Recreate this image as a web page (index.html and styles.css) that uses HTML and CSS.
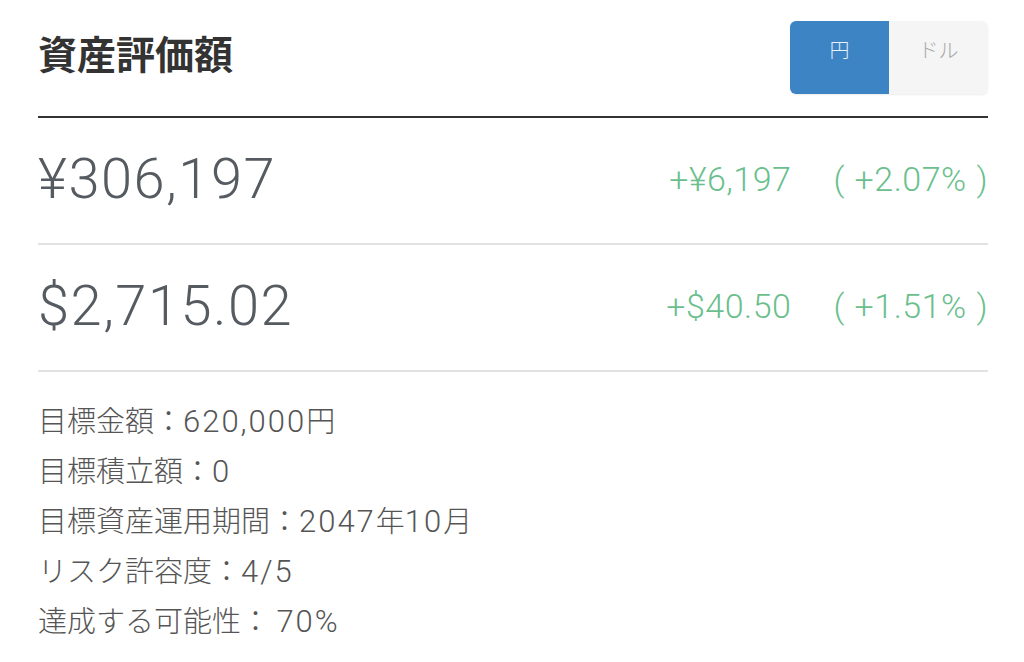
FILE: index.html
```html
<!DOCTYPE html>
<html lang="ja">
<head>
<meta charset="utf-8">
<link rel="stylesheet" href="styles.css">
</head>
<body>
<div class="page">
  <header class="header">
    <h1 class="title">資産評価額</h1>
    <div class="toggle">
      <div class="toggle-btn active">円</div>
      <div class="toggle-btn">ドル</div>
    </div>
  </header>
  <div class="row">
    <div class="amount">¥306,197</div>
    <div class="change"><span class="diff">+¥6,197</span><span class="pct">( +2.07% )</span></div>
  </div>
  <div class="row">
    <div class="amount">$2,715.02</div>
    <div class="change"><span class="diff">+$40.50</span><span class="pct">( +1.51% )</span></div>
  </div>
  <ul class="info">
    <li>目標金額：<span class="num">620,000</span>円</li>
    <li>目標積立額：<span class="num">0</span></li>
    <li>目標資産運用期間：<span class="num">2047</span>年<span class="num">10</span>月</li>
    <li>リスク許容度：<span class="num">4/5</span></li>
    <li>達成する可能性： <span class="num">70%</span></li>
  </ul>
</div>
</body>
</html>
```

FILE: styles.css
```css
html, body {
  margin: 0;
  padding: 0;
  background: #ffffff;
}
body {
  font-family: Roboto, "Noto Sans CJK JP", sans-serif;
  color: #333;
}
.page {
  padding: 0 36px 0 38px;
}
.header {
  display: flex;
  justify-content: space-between;
  align-items: flex-start;
  height: 116px;
  border-bottom: 2px solid #333;
}
.title {
  margin: 24px 0 0 0;
  font-family: "Noto Sans CJK JP", sans-serif;
  font-size: 39px;
  font-weight: 700;
  line-height: 56px;
  color: #333;
}
.toggle {
  display: flex;
  margin-top: 21px;
  height: 73px;
  border-radius: 6px;
  overflow: hidden;
  box-shadow: 0 1px 2px rgba(0,0,0,0.08);
}
.toggle-btn {
  width: 99px;
  display: flex;
  align-items: center;
  justify-content: center;
  padding-bottom: 16px;
  box-sizing: border-box;
  font-family: "Noto Sans CJK JP", sans-serif;
  font-size: 20px;
  color: #a8a8a8;
  background: #f5f5f5;
  font-weight: 300;
}
.toggle-btn.active {
  background: #3d84c4;
  color: #e8f0f8;
  box-shadow: 2px 0 3px rgba(0,0,0,0.08);
}
.row {
  display: flex;
  justify-content: space-between;
  align-items: center;
  height: 125px;
  border-bottom: 2px solid #e2e2e2;
}
.amount {
  font-size: 56px;
  font-weight: 300;
  letter-spacing: 1.5px;
  color: #555b60;
  margin-top: -4px;
}
.change {
  display: flex;
  gap: 42px;
  font-size: 34px;
  font-weight: 300;
  letter-spacing: 0.5px;
  word-spacing: 1px;
  color: #6bbf8e;
  margin-top: -4px;
}
.info {
  list-style: none;
  margin: 0;
  padding: 22px 0 0 0;
  text-spacing-trim: space-all;
}
.info li {
  font-family: "Noto Sans CJK JP", sans-serif;
  font-size: 29px;
  line-height: 50px;
  height: 50px;
  color: #555;
  font-weight: 300;
}
.num {
  font-family: Roboto, sans-serif;
  font-size: 31px;
  line-height: 20px;
  letter-spacing: 2px;
}
```
